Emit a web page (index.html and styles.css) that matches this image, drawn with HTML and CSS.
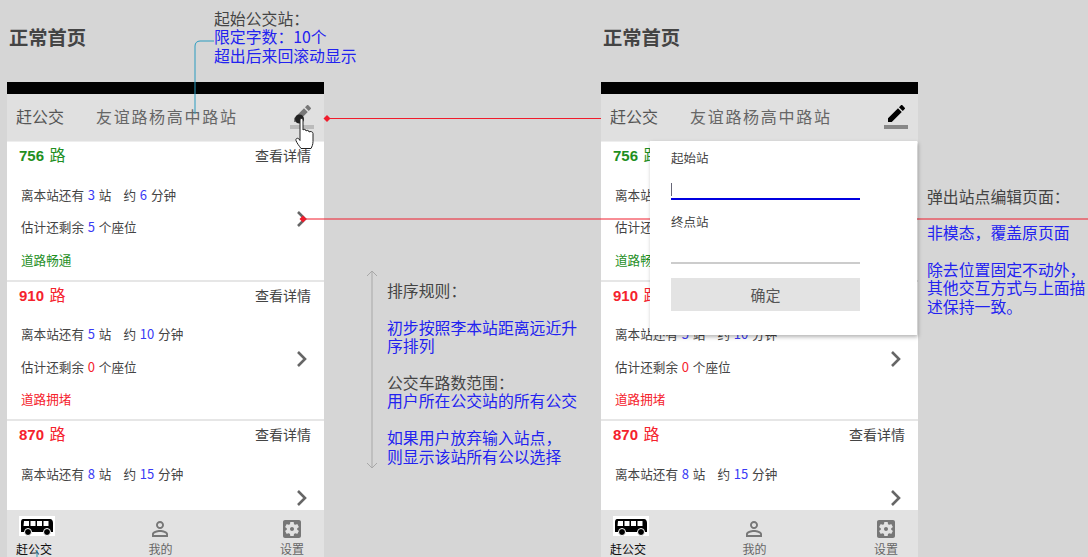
FILE: index.html
```html
<!DOCTYPE html>
<html lang="zh-CN">
<head>
    <meta charset="UTF-8">
    <meta name="viewport" content="width=device-width, initial-scale=1.0">
    <title>正常首页</title>
    <link rel="stylesheet" href="styles.css">
</head>
<body>
    <h1 class="page-title page-title-left">正常首页</h1>
    <h1 class="page-title page-title-right">正常首页</h1>

    <div class="note note-start">
        <p>起始公交站：</p>
        <p class="blue">限定字数：10个<br>超出后来回滚动显示</p>
    </div>

    <div class="note note-sort">
        <p>排序规则：</p>
        <p class="blue">初步按照李本站距离远近升序排列</p>
        <p>公交车路数范围：<br><span class="blue">用户所在公交站的所有公交</span></p>
        <p class="blue">如果用户放弃输入站点，<br>则显示该站所有公以选择</p>
    </div>

    <div class="note note-popup">
        <p>弹出站点编辑页面：</p>
        <p class="blue">非模态，覆盖原页面</p>
        <p class="blue">除去位置固定不动外，其他交互方式与上面描述保持一致。</p>
    </div>

    <!-- 左边手机 -->
    <div class="phone phone-left">
        <div class="status-bar"></div>
        <div class="top-bar">
            <span class="top-label">赶公交</span>
            <span class="top-station">友谊路杨高中路站</span>
            <svg class="edit-icon edit-icon-hover" viewBox="0 0 24 24"><path d="M17.75 7L14 3.25l-10 10V17h3.75l10-10zm2.96-2.96c.39-.39.39-1.02 0-1.41L18.37.29c-.39-.39-1.02-.39-1.41 0L15 2.25 18.75 6l1.96-1.96z"/><path class="edit-line" d="M0 20h24v4H0z"/></svg>
        </div>
        <div class="bus-list">
            <div class="bus-card">
                <div class="bus-head"><span class="bus-no green"><b>756</b> 路</span><span class="bus-more">查看详情</span></div>
                <div class="bus-body">
                    <div class="bus-info">
                        <p>离本站还有 <i>3</i> 站<span class="gap"></span>约 <i>6</i> 分钟</p>
                        <p>估计还剩余 <i>5</i> 个座位</p>
                        <p class="green">道路畅通</p>
                    </div>
                    <svg class="chevron" viewBox="0 0 12 18"><path d="M2 2l7 7-7 7"/></svg>
                </div>
            </div>
            <div class="bus-card">
                <div class="bus-head"><span class="bus-no red"><b>910</b> 路</span><span class="bus-more">查看详情</span></div>
                <div class="bus-body">
                    <div class="bus-info">
                        <p>离本站还有 <i>5</i> 站<span class="gap"></span>约 <i>10</i> 分钟</p>
                        <p>估计还剩余 <i class="red">0</i> 个座位</p>
                        <p class="red">道路拥堵</p>
                    </div>
                    <svg class="chevron" viewBox="0 0 12 18"><path d="M2 2l7 7-7 7"/></svg>
                </div>
            </div>
            <div class="bus-card">
                <div class="bus-head"><span class="bus-no red"><b>870</b> 路</span><span class="bus-more">查看详情</span></div>
                <div class="bus-body">
                    <div class="bus-info">
                        <p>离本站还有 <i>8</i> 站<span class="gap"></span>约 <i>15</i> 分钟</p>
                    </div>
                    <svg class="chevron" viewBox="0 0 12 18"><path d="M2 2l7 7-7 7"/></svg>
                </div>
            </div>
        </div>
        <div class="tab-bar">
            <div class="tab tab-active">
                <svg class="bus-icon" viewBox="0 0 36 20"><rect width="36" height="20" fill="#fff"/><path d="M4 3h27c2 0 3 2 3 4v9H2V6c0-2 1-3 2-3z"/><path fill="#fff" d="M5 5h5v5H4.500zM11.500 5h5v5h-5zM18 5h5v5h-5zM24.500 5h5v5h-5z"/><circle cx="9" cy="16" r="3.500" stroke="#fff"/><circle cx="28" cy="16" r="3.500" stroke="#fff"/></svg>
                <span>赶公交</span>
            </div>
            <div class="tab tab-middle">
                <svg class="tab-icon" viewBox="0 0 24 24"><path d="M12 5.900c1.160 0 2.100.94 2.100 2.100s-.94 2.100-2.100 2.100S9.900 9.160 9.900 8s.94-2.100 2.100-2.100m0 9c2.970 0 6.100 1.460 6.100 2.100v1.100H5.900V17c0-.64 3.130-2.100 6.100-2.100M12 4C9.790 4 8 5.790 8 8s1.790 4 4 4 4-1.790 4-4-1.790-4-4-4zm0 9c-2.670 0-8 1.340-8 4v3h16v-3c0-2.660-5.330-4-8-4z"/></svg>
                <span>我的</span>
            </div>
            <div class="tab">
                <svg class="tab-icon" viewBox="0 0 24 24"><path d="M12 10c-1.100 0-2 .9-2 2s.9 2 2 2 2-.9 2-2-.9-2-2-2zm7-7H5c-1.110 0-2 .9-2 2v14c0 1.100.89 2 2 2h14c1.110 0 2-.9 2-2V5c0-1.100-.89-2-2-2zm-1.750 9c0 .23-.02.46-.05.68l1.480 1.160c.13.11.17.3.08.45l-1.400 2.420c-.09.15-.27.21-.43.15l-1.740-.7c-.36.28-.76.51-1.180.69l-.26 1.850c-.03.17-.18.3-.35.3h-2.800c-.17 0-.32-.13-.35-.29l-.26-1.850c-.43-.18-.82-.41-1.180-.69l-1.740.7c-.16.06-.34 0-.43-.15l-1.400-2.420c-.09-.15-.05-.34.08-.45l1.480-1.160c-.03-.23-.05-.46-.05-.69 0-.23.02-.46.05-.68l-1.480-1.160c-.13-.11-.17-.3-.08-.45l1.400-2.420c.09-.15.27-.21.43-.15l1.740.7c.36-.28.76-.51 1.180-.69l.26-1.850c.03-.17.18-.3.35-.3h2.800c.17 0 .32.13.35.29l.26 1.850c.43.18.82.41 1.180.69l1.740-.7c.16-.06.34 0 .43.15l1.400 2.420c.09.15.05.34-.08.45l-1.480 1.160c.03.23.05.46.05.69z"/></svg>
                <span>设置</span>
            </div>
        </div>
    </div>

    <!-- 右边手机，带弹出层 -->
    <div class="phone phone-right">
        <div class="status-bar"></div>
        <div class="top-bar">
            <span class="top-label">赶公交</span>
            <span class="top-station">友谊路杨高中路站</span>
            <svg class="edit-icon" viewBox="0 0 24 24"><path d="M17.75 7L14 3.25l-10 10V17h3.75l10-10zm2.96-2.96c.39-.39.39-1.02 0-1.41L18.37.29c-.39-.39-1.02-.39-1.41 0L15 2.25 18.75 6l1.96-1.96z"/><path class="edit-line" d="M0 20h24v4H0z"/></svg>
        </div>
        <div class="bus-list">
            <div class="bus-card">
                <div class="bus-head"><span class="bus-no green"><b>756</b> 路</span><span class="bus-more">查看详情</span></div>
                <div class="bus-body">
                    <div class="bus-info">
                        <p>离本站还有 <i>3</i> 站<span class="gap"></span>约 <i>6</i> 分钟</p>
                        <p>估计还剩余 <i>5</i> 个座位</p>
                        <p class="green">道路畅通</p>
                    </div>
                    <svg class="chevron" viewBox="0 0 12 18"><path d="M2 2l7 7-7 7"/></svg>
                </div>
            </div>
            <div class="bus-card">
                <div class="bus-head"><span class="bus-no red"><b>910</b> 路</span><span class="bus-more">查看详情</span></div>
                <div class="bus-body">
                    <div class="bus-info">
                        <p>离本站还有 <i>5</i> 站<span class="gap"></span>约 <i>10</i> 分钟</p>
                        <p>估计还剩余 <i class="red">0</i> 个座位</p>
                        <p class="red">道路拥堵</p>
                    </div>
                    <svg class="chevron" viewBox="0 0 12 18"><path d="M2 2l7 7-7 7"/></svg>
                </div>
            </div>
            <div class="bus-card">
                <div class="bus-head"><span class="bus-no red"><b>870</b> 路</span><span class="bus-more">查看详情</span></div>
                <div class="bus-body">
                    <div class="bus-info">
                        <p>离本站还有 <i>8</i> 站<span class="gap"></span>约 <i>15</i> 分钟</p>
                    </div>
                    <svg class="chevron" viewBox="0 0 12 18"><path d="M2 2l7 7-7 7"/></svg>
                </div>
            </div>
        </div>
        <div class="tab-bar">
            <div class="tab tab-active">
                <svg class="bus-icon" viewBox="0 0 36 20"><rect width="36" height="20" fill="#fff"/><path d="M4 3h27c2 0 3 2 3 4v9H2V6c0-2 1-3 2-3z"/><path fill="#fff" d="M5 5h5v5H4.500zM11.500 5h5v5h-5zM18 5h5v5h-5zM24.500 5h5v5h-5z"/><circle cx="9" cy="16" r="3.500" stroke="#fff"/><circle cx="28" cy="16" r="3.500" stroke="#fff"/></svg>
                <span>赶公交</span>
            </div>
            <div class="tab tab-middle">
                <svg class="tab-icon" viewBox="0 0 24 24"><path d="M12 5.900c1.160 0 2.100.94 2.100 2.100s-.94 2.100-2.100 2.100S9.900 9.160 9.900 8s.94-2.100 2.100-2.100m0 9c2.970 0 6.100 1.460 6.100 2.100v1.100H5.900V17c0-.64 3.130-2.100 6.100-2.100M12 4C9.790 4 8 5.790 8 8s1.790 4 4 4 4-1.790 4-4-1.790-4-4-4zm0 9c-2.670 0-8 1.340-8 4v3h16v-3c0-2.660-5.330-4-8-4z"/></svg>
                <span>我的</span>
            </div>
            <div class="tab">
                <svg class="tab-icon" viewBox="0 0 24 24"><path d="M12 10c-1.100 0-2 .9-2 2s.9 2 2 2 2-.9 2-2-.9-2-2-2zm7-7H5c-1.110 0-2 .9-2 2v14c0 1.100.89 2 2 2h14c1.110 0 2-.9 2-2V5c0-1.100-.89-2-2-2zm-1.750 9c0 .23-.02.46-.05.68l1.480 1.160c.13.11.17.3.08.45l-1.400 2.420c-.09.15-.27.21-.43.15l-1.740-.7c-.36.28-.76.51-1.180.69l-.26 1.850c-.03.17-.18.3-.35.3h-2.800c-.17 0-.32-.13-.35-.29l-.26-1.850c-.43-.18-.82-.41-1.180-.69l-1.740.7c-.16.06-.34 0-.43-.15l-1.400-2.420c-.09-.15-.05-.34.08-.45l1.480-1.160c-.03-.23-.05-.46-.05-.69 0-.23.02-.46.05-.68l-1.480-1.160c-.13-.11-.17-.3-.08-.45l1.400-2.420c.09-.15.27-.21.43-.15l1.740.7c.36-.28.76-.51 1.180-.69l.26-1.850c.03-.17.18-.3.35-.3h2.800c.17 0 .32.13.35.29l.26 1.850c.43.18.82.41 1.180.69l1.740-.7c.16-.06.34 0 .43.15l1.400 2.420c.09.15.05.34-.08.45l-1.480 1.160c.03.23.05.46.05.69z"/></svg>
                <span>设置</span>
            </div>
        </div>

        <form class="station-popup">
            <label class="popup-label">起始站</label>
            <div class="popup-input popup-input-focus"><span class="caret"></span></div>
            <label class="popup-label">终点站</label>
            <div class="popup-input"></div>
            <button type="button" class="popup-button">确定</button>
        </form>
    </div>

    <!-- 标注连线 -->
    <svg class="annotations" viewBox="0 0 1088 557">
        <path class="line-teal" d="M214 41h-14c-3 0-5 2-5 5v68"/>
        <path class="line-teal" d="M37 550v7"/>
        <path class="line-red" d="M327 118.500h274"/>
        <path class="line-red" d="M303 219h785"/>
        <path class="dot-red" d="M327 115l3.500 3.500-3.500 3.500-3.500-3.500z"/>
        <path class="dot-red" d="M303 215.500l3.500 3.500-3.500 3.500-3.500-3.500z"/>
        <path class="line-arrow" d="M372 271v197M367 276l5-5 5 5M367 463l5 5 5-5"/>
        <circle cx="299.500" cy="119" r="4.500" fill="#222"/>
        <path class="hand" d="M300 120c0-2 3-2 3 0v10c1-1 3-1 3 1 1-1 3-1 3 1 1-1 4-.5 4 1.500v8c0 3-1 5-2 7h-10c-2-3-4-5-5-8-.6-2 1.500-3 3-1.500l1 1.500z"/>
    </svg>
</body>
</html>
```

FILE: styles.css
```css
* {
    box-sizing: border-box;
}

body {
    position: relative;
    width: 1088px;
    height: 557px;
    margin: 0;
    overflow: hidden;
    font-family: "Noto Sans CJK SC", "Liberation Sans", sans-serif;
    background: #d6d6d6;
    color: #333;
}

p {
    margin: 0;
}

.blue {
    color: #2222f0;
}

.green {
    color: #1f8f1f;
}

.red {
    color: #f5222d;
}

.page-title {
    position: absolute;
    top: 24px;
    margin: 0;
    font-size: 19.3px;
    line-height: 26px;
    font-weight: 700;
    color: #444;
}

.page-title-left {
    left: 9px;
}

.page-title-right {
    left: 603px;
}

/* 标注文字 */
.note {
    position: absolute;
    font-size: 15.85px;
    line-height: 18.4px;
    color: #444;
}

.note-start {
    left: 214px;
    top: 10px;
}

.note-sort {
    left: 387px;
    top: 282px;
    width: 192px;
}

.note-sort p + p {
    margin-top: 18.4px;
}

.note-popup {
    left: 927px;
    top: 188px;
    width: 161px;
}

.note-popup p + p {
    margin-top: 18px;
}

/* 手机 */
.phone {
    position: absolute;
    top: 82px;
    width: 317px;
    height: 475px;
    display: flex;
    flex-direction: column;
    background: #fff;
}

.phone-left {
    left: 7px;
}

.phone-right {
    left: 601px;
}

.status-bar {
    height: 12px;
    background: #000;
}

.top-bar {
    height: 48px;
    display: flex;
    align-items: center;
    padding: 0 10px 2px 9px;
    background: #e0e0e0;
    border-bottom: 1px solid #eee;
}

.top-label {
    width: 80px;
    margin-bottom: 2px;
    font-size: 16px;
    color: #555;
}

.top-station {
    flex: 1;
    margin-bottom: 2px;
    font-size: 16px;
    letter-spacing: 1.7px;
    color: #666;
}

.edit-icon {
    width: 24px;
    height: 24px;
    fill: #000;
}

.edit-icon .edit-line {
    fill: #888;
}

.edit-icon-hover {
    fill: #777;
}

.edit-icon-hover .edit-line {
    fill: #bbb;
}

.bus-list {
    flex: 1;
    overflow: hidden;
}

.bus-card {
    height: 139.5px;
    padding: 0 13px 0 12px;
    border-bottom: 2px solid #e6e6e6;
}

.bus-head {
    height: 26px;
    margin-bottom: 10.5px;
    display: flex;
    justify-content: space-between;
    align-items: center;
}

.bus-no {
    font-size: 16px;
    line-height: 26px;
}

.bus-no b {
    margin-right: 2px;
    font-size: 15px;
    font-family: "Liberation Sans", sans-serif;
}

.bus-more {
    font-size: 14px;
    color: #444;
}

.bus-body {
    display: flex;
    justify-content: space-between;
    align-items: flex-start;
}

.bus-info {
    padding-left: 2px;
    font-size: 12.6px;
    color: #444;
}

.bus-info p {
    height: 32.5px;
    line-height: 32.5px;
}

.bus-info i {
    margin: 0 1px;
    font-style: normal;
    font-size: 13px;
    color: #3a3af5;
}

.bus-info i.red {
    color: #f5222d;
}

.gap {
    display: inline-block;
    width: 12px;
}

.chevron {
    width: 12px;
    height: 18px;
    margin-top: 31.5px;
    margin-right: 3px;
    fill: none;
    stroke: #666;
    stroke-width: 2.6;
}

/* 底部标签 */
.tab-bar {
    height: 47px;
    flex: none;
    display: flex;
    justify-content: space-between;
    padding: 7px 20px 0 9px;
    background: #e2e2e2;
}

.tab {
    display: flex;
    flex-direction: column;
    align-items: center;
    font-size: 12px;
    line-height: 15px;
    color: #666;
}

.tab-active {
    align-items: flex-start;
    color: #111;
}

.tab-middle {
    margin-right: 14px;
}

.tab-icon {
    width: 24px;
    height: 24px;
    fill: #777;
}

.bus-icon {
    width: 36px;
    height: 20px;
    margin: -1px 0 5px 3px;
}

/* 弹出层 */
.station-popup {
    position: absolute;
    z-index: 2;
    left: 49px;
    top: 59px;
    width: 267px;
    height: 194px;
    padding: 8px 57px 0 21px;
    background: #fff;
    box-shadow: 1px 2px 4px rgba(0, 0, 0, 0.3);
}

.popup-label {
    display: block;
    height: 18px;
    font-size: 12.5px;
    line-height: 18px;
    color: #444;
}

.popup-input {
    height: 33px;
    margin: 0 0 13px;
    padding-top: 16px;
    border-bottom: 2px solid #ccc;
}

.popup-input-focus {
    border-bottom-color: #0000e0;
}

.caret {
    display: block;
    width: 1px;
    height: 13px;
    background: #667;
}

.popup-button {
    display: block;
    width: 100%;
    height: 33px;
    margin-top: 14px;
    border: none;
    background: #e3e3e3;
    font-family: inherit;
    font-size: 15px;
    color: #555;
}

/* 连线 */
.annotations {
    position: absolute;
    z-index: 1;
    left: 0;
    top: 0;
    width: 1088px;
    height: 557px;
}

.line-teal {
    fill: none;
    stroke: #2a9cc0;
    stroke-width: 1;
}

.line-red {
    fill: none;
    stroke: #f01c2c;
    stroke-width: 1;
}

.dot-red {
    fill: #f01c2c;
}

.line-arrow {
    fill: none;
    stroke: #a8a8a8;
    stroke-width: 1;
}

.hand {
    fill: #fff;
    stroke: #222;
    stroke-width: 1;
}
```
